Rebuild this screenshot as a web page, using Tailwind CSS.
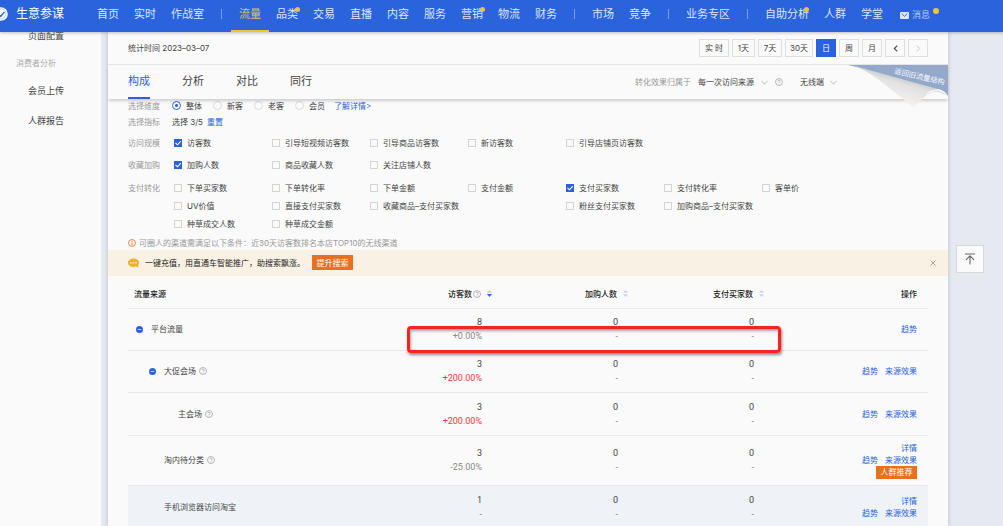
<!DOCTYPE html>
<html lang="zh-CN">
<head>
<meta charset="utf-8">
<meta name="viewport" content="width=device-width, initial-scale=1">
<title>生意参谋</title>
<script src="https://cdn.jsdelivr.net/npm/@tailwindcss/browser@4"></script>
</head>
<body class="h-screen overflow-hidden flex flex-col bg-[#e6eaf0] font-['Inter','Noto_Sans_CJK_SC',sans-serif] text-[8px] leading-3 text-[#444]">

<svg class="hidden" aria-hidden="true">
  <symbol id="help" viewBox="0 0 16 16"><circle cx="8" cy="8" r="7" fill="none" stroke="currentColor" stroke-width="1.4"/><path d="M5.8 6.4a2.2 2.2 0 1 1 3.3 1.9c-.8.5-1.1.9-1.1 1.6M8 11.2v1.5" fill="none" stroke="currentColor" stroke-width="1.4"/></symbol>
  <symbol id="sort-none" viewBox="0 0 10 14"><path d="M5 0 10 5.6H0z" fill="#c9d4e2"/><path d="M5 14 0 8.4h10z" fill="#c9d4e2"/></symbol>
  <symbol id="sort-desc" viewBox="0 0 10 14"><path d="M5 0 10 5.6H0z" fill="#c3d3ee"/><path d="M5 14 0 8h10z" fill="#2a62dd"/></symbol>
  <symbol id="down" viewBox="0 0 14 10"><path d="M1 1.5 7 8.5 13 1.5" fill="none" stroke="#b0b0b0" stroke-width="1.6"/></symbol>
  <symbol id="minus" viewBox="0 0 14 14"><circle cx="7" cy="7" r="7" fill="#2a62dd"/><path d="M3.5 7h7" stroke="#b9ccf5" stroke-width="2"/></symbol>
</svg>

<header class="relative z-20 flex h-8 shrink-0 items-center bg-[#2a63dc] pb-1 text-[11px] leading-4 text-[#dbe6fb] shadow-[0_1px_3px_rgba(0,0,0,0.25)]">
  <a href="#" class="flex w-[97px] items-center text-xs text-white">
    <svg class="-ml-[6px] mr-2 size-[14px] shrink-0" viewBox="0 0 14 14" aria-hidden="true"><circle cx="7" cy="7" r="6.8" fill="#fff"/><circle cx="7" cy="7" r="5" fill="none" stroke="#9dbaf2" stroke-width=".7"/><path d="M4.2 7 6.6 9.4 10.4 5" fill="none" stroke="#2a63dc" stroke-width="1.4"/></svg>
    生意参谋
  </a>
  <nav class="flex items-center gap-[15px] whitespace-nowrap">
    <a href="#">首页</a>
    <a href="#">实时</a>
    <a href="#">作战室</a>
    <span class="mx-0.5 h-[10px] w-px bg-[#7d9fea]"></span>
    <a href="#" class="relative text-[#d8c46a]">流量<span class="absolute -inset-x-2 -bottom-[10px] h-0.5 bg-[#f0c630]"></span></a>
    <a href="#" class="relative">品类<span class="absolute -right-0.5 top-px size-[5px] rounded-full bg-[#f0c630]"></span></a>
    <a href="#">交易</a>
    <a href="#">直播</a>
    <a href="#">内容</a>
    <a href="#">服务</a>
    <a href="#" class="relative">营销<span class="absolute -right-0.5 top-px size-[5px] rounded-full bg-[#f0c630]"></span></a>
    <a href="#">物流</a>
    <a href="#">财务</a>
    <span class="mx-0.5 h-[10px] w-px bg-[#7d9fea]"></span>
    <a href="#">市场</a>
    <a href="#">竞争</a>
    <span class="mx-0.5 h-[10px] w-px bg-[#7d9fea]"></span>
    <a href="#">业务专区</a>
    <span class="mx-0.5 h-[10px] w-px bg-[#7d9fea]"></span>
    <a href="#" class="relative">自助分析<span class="absolute right-0 top-px size-[5px] rounded-full bg-[#f0c630]"></span></a>
    <a href="#">人群</a>
    <a href="#">学堂</a>
    <a href="#" class="relative ml-0.5 flex items-center gap-[3px] pt-0.5 text-[9px] text-[#b4c9f5]">
      <svg class="h-[7px] w-[9px]" viewBox="0 0 18 14" aria-hidden="true"><rect width="18" height="14" rx="2" fill="#dbe6fb"/><path d="M3.5 3.5 9 8.5l5.500-5" fill="none" stroke="#2a63dc" stroke-width="1.800"/></svg>
      消息<span class="absolute -right-[6px] top-[3px] size-[6px] rounded-full bg-[#f0c630]"></span>
    </a>
  </nav>
</header>

<div class="flex min-h-0 flex-1">
  <aside class="w-[101px] shrink-0 bg-[#fafafa] text-[9px]">
    <nav class="-mt-[11px] flex flex-col">
      <a href="#" class="flex h-[29px] items-center pl-7">页面配置</a>
      <h2 class="flex h-[26px] items-center pl-4 text-[8px] text-[#aaa]">消费者分析</h2>
      <a href="#" class="flex h-[30px] items-center pl-7">会员上传</a>
      <a href="#" class="flex h-[29px] items-center pl-7">人群报告</a>
    </nav>
  </aside>

  <main class="ml-[7px] mr-[55px] min-w-0 flex-1 bg-[#fafafa] shadow-[0_0_4px_rgba(60,70,90,0.3)]">
    <div class="flex h-[33px] items-center justify-between border-b border-[#e4e4e4] pl-5 pr-5">
      <p>统计时间 2023–03–07</p>
      <div class="flex gap-[3px]">
        <button class="h-[18px] w-[30px] border border-[#dedede]">实 时</button>
        <button class="h-[18px] w-[23px] border border-[#dedede]">1天</button>
        <button class="h-[18px] w-6 border border-[#dedede]">7天</button>
        <button class="h-[18px] w-7 border border-[#dedede]">30天</button>
        <button class="h-[18px] w-5 bg-[#2a62dd] text-white">日</button>
        <button class="h-[18px] w-5 border border-[#dedede]">周</button>
        <button class="h-[18px] w-5 border border-[#dedede]">月</button>
        <button class="flex h-[18px] w-5 items-center justify-center border border-[#dedede]" aria-label="上一日"><svg class="h-[7px] w-[5px]" viewBox="0 0 8 12"><path d="M7 1 2 6l5 5" fill="none" stroke="#444" stroke-width="2"/></svg></button>
        <button class="flex h-[18px] w-5 items-center justify-center border border-[#dedede]" aria-label="下一日"><svg class="h-[7px] w-[5px]" viewBox="0 0 8 12"><path d="m1 1 5 5-5 5" fill="none" stroke="#c4c4c4" stroke-width="1.600"/></svg></button>
      </div>
    </div>

    <div class="relative z-10 flex h-[34px] items-center justify-between bg-[#fafafa] pl-5 pr-[111px] shadow-[0_3px_3px_-1px_rgba(0,0,0,0.18)]">
      <nav class="flex h-full gap-8 text-[11px]">
        <a href="#" class="flex h-full items-center border-b-2 border-[#2a62dd] text-[#2a62dd]">构成</a>
        <a href="#" class="flex h-full items-center border-b-2 border-transparent">分析</a>
        <a href="#" class="flex h-full items-center border-b-2 border-transparent">对比</a>
        <a href="#" class="flex h-full items-center border-b-2 border-transparent">同行</a>
      </nav>
      <div class="flex items-center">
        <label for="attr" class="mr-[7px] text-[#999]">转化效果归属于</label>
        <span class="relative flex items-center">
          <select id="attr" class="w-[70px] appearance-none bg-transparent"><option>每一次访问来源</option></select>
          <svg class="pointer-events-none absolute right-0 h-[5px] w-[7px]"><use href="#down"/></svg>
        </span>
        <svg class="ml-[7px] mr-[17px] size-2 text-[#999]"><use href="#help"/></svg>
        <span class="relative flex items-center">
          <select aria-label="终端" class="w-[37px] appearance-none bg-transparent"><option>无线端</option></select>
          <svg class="pointer-events-none absolute right-0 h-[5px] w-[7px]"><use href="#down"/></svg>
        </span>
      </div>
      <a href="#" class="absolute right-0 top-0" aria-label="返回旧流量结构">
        <svg class="h-[43px] w-[100px]" viewBox="0 0 300 129">
          <defs>
            <linearGradient id="paper" gradientUnits="userSpaceOnUse" x1="180" y1="40" x2="160" y2="110"><stop offset="0" stop-color="#c6c7c9"/><stop offset=".3" stop-color="#e2e2e3"/><stop offset="1" stop-color="#f3efed"/></linearGradient>
          </defs>
          <path d="M0 0H300V94Q292 80 275 75L60 18Q30 5 0 0z" fill="#93a8cb"/>
          <path d="M10 1Q50 10 120 66L196 127 232 94Q262 66 300 94 292 78 272 73L60 14Q30 5 10 1z" fill="url(#paper)"/>
          <path d="M300 94Q270 62 232 92 240 76 272 73 292 78 300 94z" fill="#fafafa"/>
          <text x="138" y="25" font-size="22" fill="#f4f7fc" transform="rotate(13 138 25)">返回旧流量结构</text>
        </svg>
      </a>
    </div>

    <form class="pl-5">
      <div role="radiogroup" aria-label="选择维度" class="flex h-[13px] items-center">
        <span class="w-11 text-[#999]">选择维度</span>
        <div class="flex items-center gap-[11px]">
          <label class="flex items-center gap-[5px]"><input type="radio" name="dim" checked class="size-[9px] appearance-none rounded-full border border-[#d4d4d4] checked:border-[#2a62dd] checked:bg-[radial-gradient(circle,#2a62dd_1px,transparent_2px)]">整体</label>
          <label class="flex items-center gap-[5px]"><input type="radio" name="dim" class="size-[9px] appearance-none rounded-full border border-[#dcdcdc] checked:border-[#2a62dd]">新客</label>
          <label class="flex items-center gap-[5px]"><input type="radio" name="dim" class="size-[9px] appearance-none rounded-full border border-[#dcdcdc] checked:border-[#2a62dd]">老客</label>
          <label class="flex items-center gap-[5px]"><input type="radio" name="dim" class="size-[9px] appearance-none rounded-full border border-[#dcdcdc] checked:border-[#2a62dd]">会员</label>
        </div>
        <a href="#" class="ml-[9px] text-[#2a62dd]">了解详情&gt;</a>
      </div>
      <div class="flex h-5 items-center">
        <span class="w-11 text-[#999]">选择指标</span>
        <span>选择 3/5</span>
        <button type="button" class="ml-1 text-[#2a62dd]">重置</button>
      </div>
      <div id="metrics"></div>
      <p class="flex items-center gap-[3px] pb-px pt-1 text-[#999]">
        <svg class="size-2" viewBox="0 0 16 16" aria-hidden="true"><circle cx="8" cy="8" r="7" fill="none" stroke="#e8701f" stroke-width="1.600"/><path d="M8 3.500v2M8 7v5.500" stroke="#e8701f" stroke-width="1.800"/></svg>
        可圈人的渠道需满足以下条件：近30天访客数排名本店TOP10的无线渠道
      </p>
    </form>

    <div class="flex h-[26px] items-center bg-[#f8f1e4] pb-px pl-5 pr-3 text-[#222]">
      <svg class="mr-[6px] h-[10px] w-[11px]" viewBox="0 0 22 20" aria-hidden="true"><path d="M11 1C5 1 0 4.500 0 9.500S5 18 11 18c2 0 3.500-.3 5-.8l5 1.800-1-4.500c1.300-1.400 2-3 2-5C22 4.500 17 1 11 1z" fill="#efb02c"/><path d="M4.500 8.500h3v2.500h-3zM9.500 8.500h3v2.500h-3zM14.500 8.500h3v2.500h-3z" fill="#fff"/></svg>
      <span>一键充值，用直通车智能推广，助搜索飘涨。</span>
      <button class="ml-[7px] h-[15px] w-[41px] bg-[#e8701f] text-white">提升搜索</button>
      <button class="ml-auto" aria-label="关闭"><svg class="size-[6px]" viewBox="0 0 12 12"><path d="m1 1 10 10M11 1 1 11" stroke="#888" stroke-width="1.500"/></svg></button>
    </div>

    <div class="relative mx-5">
      <table class="w-full table-fixed border-collapse">
        <colgroup><col><col class="w-[136px]"><col class="w-[136px]"><col class="w-[136px]"><col class="w-[164px]"></colgroup>
        <thead class="text-[#222]">
          <tr class="h-8 border-b border-[#e8e8e8]">
            <th class="pl-[6px] pt-1 text-left font-medium">流量来源</th>
            <th class="pt-1 font-medium"><span class="flex items-center justify-end">访客数<svg class="ml-px mr-[6px] size-2 text-[#999]"><use href="#help"/></svg><svg class="h-[7px] w-[5px]"><use href="#sort-desc"/></svg></span></th>
            <th class="pt-1 font-medium"><span class="flex items-center justify-end gap-[6px]">加购人数<svg class="h-[7px] w-[5px]"><use href="#sort-none"/></svg></span></th>
            <th class="pt-1 font-medium"><span class="flex items-center justify-end gap-[6px]">支付买家数<svg class="h-[7px] w-[5px]"><use href="#sort-none"/></svg></span></th>
            <th class="pr-[11px] pt-1 text-right font-medium">操作</th>
          </tr>
        </thead>
        <tbody id="rows"></tbody>
      </table>
      <div class="pointer-events-none absolute left-[279px] right-[147px] top-[50px] h-[27px] rounded-[4px] border-3 border-[#f5241f] shadow-[1px_2px_3px_rgba(0,0,0,0.45),inset_1px_2px_3px_rgba(0,0,0,0.35)]"></div>
    </div>
  </main>
</div>

<button class="fixed right-[19px] top-[245px] flex size-7 items-center justify-center border border-[#d8d8d8] bg-[#fafafa]" aria-label="返回顶部">
  <svg class="size-3" viewBox="0 0 12 12"><path d="M1 1h10M6 11.500V2.800M2 6.800l4-4 4 4" fill="none" stroke="#666" stroke-width="1.100"/></svg>
</button>

<script>
const groups = [
  { name: '访问规模', box: 'flex h-[22px] items-center', rows: [['*访客数', '引导短视频访客数', '引导商品访客数', '新访客数', '引导店铺页访客数']] },
  { name: '收藏加购', box: 'flex h-[22px] items-center', rows: [['*加购人数', '商品收藏人数', '关注店铺人数']] },
  { name: '支付转化', box: 'flex pt-[3px]', rows: [
    ['下单买家数', '下单转化率', '下单金额', '支付金额', '*支付买家数', '支付转化率', '客单价'],
    ['UV价值', '直接支付买家数', '收藏商品–支付买家数', '', '粉丝支付买家数', '加购商品–支付买家数'],
    ['种草成交人数', '种草成交金额']] }
];
const tick = `<svg class="pointer-events-none absolute left-0 hidden size-2 peer-checked:block" viewBox="0 0 8 8"><path d="M1.500 3.800 3.500 5.800 6.800 2.200" fill="none" stroke="#fff" stroke-width="1.100"/></svg>`;
const metric = m => !m ? '<span></span>' :
  `<label class="relative flex items-center gap-[5px] whitespace-nowrap"><input type="checkbox" ${m[0] === '*' ? 'checked' : ''} class="peer size-2 appearance-none border border-[#d4d4d4] checked:border-[#2a62dd] checked:bg-[#2a62dd]">${tick}${m.replace('*', '')}</label>`;
document.getElementById('metrics').innerHTML = groups.map(g =>
  `<div class="${g.box}"><span class="w-[46px] shrink-0 leading-[18px] text-[#999]">${g.name}</span><div>${g.rows.map(r =>
    `<div class="grid h-[18px] grid-cols-[repeat(7,98px)] items-center">${r.map(metric).join('')}</div>`).join('')}</div></div>`).join('');

const data = [
  { n: '平台流量', pad: 'pl-2', h: 'h-[42px]', fold: 1, v: ['8', '+0.00%'], links: [['趋势']] },
  { n: '大促会场', pad: 'pl-[21px]', h: 'h-[42px]', fold: 1, help: 1, v: ['3', '+200.00%', 'text-[#f0383a]'], links: [['趋势', '来源效果']] },
  { n: '主会场', pad: 'pl-[50px]', h: 'h-[43px]', help: 1, v: ['3', '+200.00%', 'text-[#f0383a]'], links: [['趋势', '来源效果']] },
  { n: '淘内待分类', pad: 'pl-9', h: 'h-[50px]', help: 1, v: ['3', '-25.00%'], links: [['详情'], ['趋势', '来源效果']], tag: '人群推荐' },
  { n: '手机浏览器访问淘宝', pad: 'pl-9', h: 'h-[43px] bg-[#eff3f8]', v: ['1', '-'], links: [['详情'], ['趋势', '来源效果']] }
];
const num = (a, b, c = 'text-[#888]') =>
  `<td class="pr-[10px] text-right font-['Roboto',sans-serif] text-[9px] leading-[14px]"><div>${a}</div><div class="${c}">${b}</div></td>`;
document.getElementById('rows').innerHTML = data.map(d =>
  `<tr class="${d.h} border-b border-[#e8e8e8]">
    <td class="${d.pad}"><span class="flex items-center">${d.fold ? '<button class="mr-2" aria-label="收起"><svg class="size-[7px]"><use href="#minus"/></svg></button>' : ''}${d.n}${d.help ? '<svg class="ml-[3px] size-2 text-[#999]"><use href="#help"/></svg>' : ''}</span></td>
    ${num(...d.v)}${num('0', '-')}${num('0', '-')}
    <td class="pr-[11px] text-[#2a62dd]">${d.links.map(l => `<div class="flex justify-end gap-[7px]">${l.map(t => `<a href="#">${t}</a>`).join('')}</div>`).join('')}${d.tag ? `<button class="ml-auto block h-[13px] w-[41px] bg-[#e8701f] text-white">${d.tag}</button>` : ''}</td>
  </tr>`).join('');
</script>
</body>
</html>
